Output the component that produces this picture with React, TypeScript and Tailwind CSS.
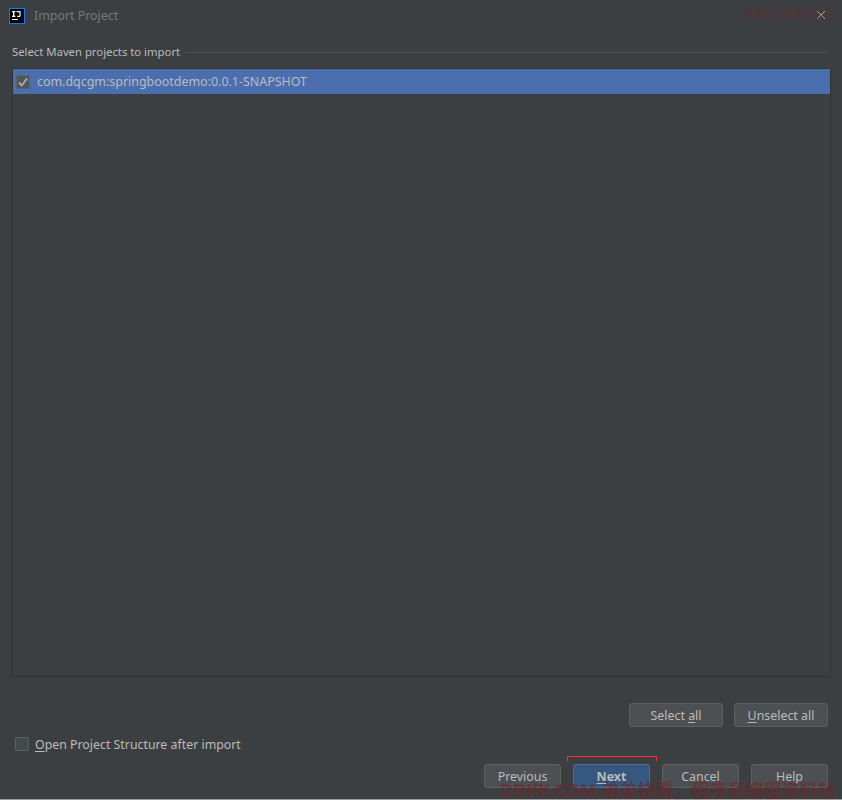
import React from "react";

const font = { fontFamily: '"Noto Sans", "Noto Sans CJK SC", sans-serif' };

function Btn({ w, pre, u, post, primary }: { w: string; pre?: string; u?: string; post?: string; primary?: boolean }) {
  return (
    <div
      className={`${w} h-[24px] flex items-center justify-center rounded-[3px] border pt-[2px] text-[12.4px] ${
        primary ? "border-[#4c708c] bg-[#365880] text-[#bbbbbb] font-bold" : "border-[#5e6060] bg-[#4c5052] text-[#bbbbbb]"
      }`}
    >
      <span>
        {pre}
        {u && <span className="underline underline-offset-2">{u}</span>}
        {post}
      </span>
    </div>
  );
}

export default function App() {
  return (
    <div className="relative w-[842px] h-[800px] overflow-hidden bg-[#3c3f41] flex flex-col text-[#bbbbbb]" style={font}>
      {/* title bar */}
      <div className="h-[32px] flex items-center pl-[9px] shrink-0">
        <svg width="16" height="16" viewBox="0 0 16 16" className="shrink-0">
          <rect x="0.5" y="0.5" width="15" height="15" fill="#000" stroke="#087cfa" />
          <rect x="3" y="11" width="6" height="1" fill="#fff" />
          <path d="M3 3h3.4v1.2h-1v3.6h1V9H3V7.8h1V4.2H3z M7.6 3h4v4.7c0 .9-.7 1.4-1.8 1.4-.9 0-1.5-.3-1.9-.9l.8-.7c.2.3.5.5 1 .5s.7-.2.7-.6V4.200H7.600z" fill="#fff" />
        </svg>
        <span className="ml-[9px] text-[12.4px] text-[#787878]">Import Project</span>
      </div>
      {/* content */}
      <div className="flex-1 flex flex-col pl-[12px] pr-[11px] min-h-0">
        <div className="h-[36px] flex items-center shrink-0 pt-[4px] pr-[3px]">
          <span className="text-[11.3px] leading-none">Select Maven projects to import</span>
          <div className="flex-1 h-px bg-[#515151] ml-[6px]" />
        </div>
        <div className="h-[609px] shrink-0 border border-[#323232] bg-[#3c3f41]">
          <div className="h-[25px] bg-[#4b6eaf] flex items-center pl-[3px]">
            <div className="w-[14px] h-[14px] bg-[#4f565c] border border-[#5f6368] rounded-[1px] flex items-center justify-center">
              <svg width="12" height="12" viewBox="0 0 12 12">
                <path d="M2 6.5 L4.8 9.5 L10 2.5" fill="none" stroke="#a7a7a7" strokeWidth="2" />
              </svg>
            </div>
            <span className="ml-[7px] pt-[1px] text-[12.45px] text-[#bbbbbb]">com.dqcgm:springbootdemo:0.0.1-SNAPSHOT</span>
          </div>
        </div>
        <div className="mt-[26px] flex justify-end gap-[11px] pr-[3px] shrink-0">
          <Btn w="w-[94px]" pre="Select " u="a" post="ll" />
          <Btn w="w-[94px]" u="U" post="nselect all" />
        </div>
        <div className="mt-[9px] h-[16px] flex items-center pl-[3px] shrink-0">
          <div className="w-[14px] h-[14px] bg-[#43494a] border border-[#5e6060] rounded-[2px]" />
          <span className="ml-[6px] pt-[2px] text-[12.35px]">
            <span className="underline underline-offset-2">O</span>pen Project Structure after import
          </span>
        </div>
        <div className="mt-[12px] flex justify-end gap-[12px] pr-[3px] shrink-0">
          <Btn w="w-[77px]" pre="Previous" />
          <Btn w="w-[77px]" u="N" post="ext" primary />
          <Btn w="w-[77px]" pre="Cancel" />
          <Btn w="w-[77px]" pre="Help" />
        </div>
      </div>
      <div className="h-[1px] bg-[#9a9a9a] shrink-0" />
      {/* overlays: annotation + watermarks */}
      <div className="absolute left-[567px] top-[756px] w-[90px] h-[5px] border-t border-l border-r border-[#ff2a2a]" />
      <svg className="absolute left-[816px] top-[10px]" width="10" height="10" viewBox="0 0 10 10">
        <path d="M1 1 L9 9 M9 1 L1 9" stroke="#a9a9a9" strokeWidth="1" />
      </svg>
      <div className="absolute left-[500px] top-[781px] text-[18px] leading-none font-bold text-[#7a1f24] opacity-50 whitespace-nowrap">
        DDKK.COM 弟弟快看，程序员编程资料站
      </div>
      <div className="absolute left-[740px] top-[7px] text-[14px] leading-none text-[#7a1f24] opacity-35 whitespace-nowrap">
        弟弟快看程序员
      </div>
    </div>
  );
}
